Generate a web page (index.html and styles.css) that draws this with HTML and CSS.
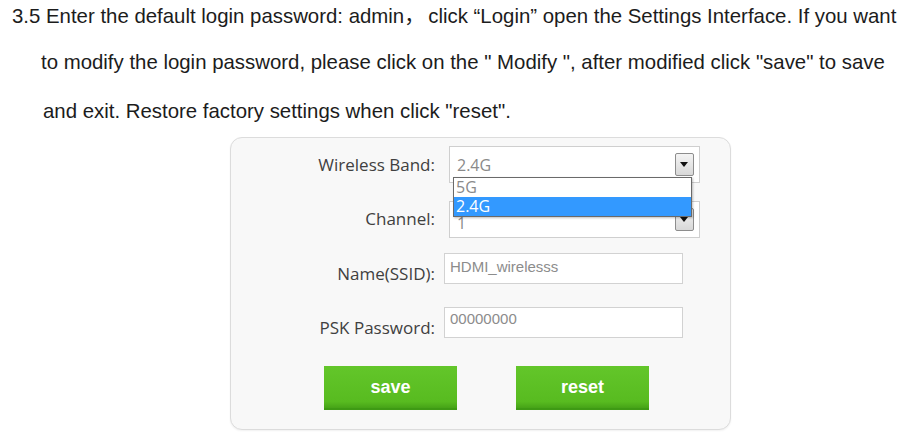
FILE: index.html
```html
<!DOCTYPE html>
<html lang="en">
<head>
<meta charset="utf-8">
<title>Settings</title>
<link rel="stylesheet" href="styles.css">
</head>
<body>
<div class="intro">
  <p class="line first">3.5 Enter the default login password: admin<span class="fw">，</span> click “Login” open the Settings Interface. If you want</p>
  <p class="line second">to modify the login password, please click on the " Modify ", after modified click "save" to save</p>
  <p class="line third">and exit. Restore factory settings when click "reset".</p>
</div>
<div class="panel">
  <div class="row row-band">
    <span class="lbl">Wireless Band:</span>
    <div class="select">
      <span class="val">2.4G</span>
      <span class="arrow"></span>
      <ul class="dropdown">
        <li class="opt">5G</li>
        <li class="opt sel">2.4G</li>
      </ul>
    </div>
  </div>
  <div class="row row-channel">
    <span class="lbl">Channel:</span>
    <div class="select">
      <span class="val val-low">1</span>
      <span class="arrow"></span>
    </div>
  </div>
  <div class="row row-ssid">
    <span class="lbl">Name(SSID):</span>
    <div class="input">HDMI_wirelesss</div>
  </div>
  <div class="row row-psk">
    <span class="lbl">PSK Password:</span>
    <div class="input input-psk">00000000</div>
  </div>
  <div class="buttons">
    <div class="btn">save</div>
    <div class="btn">reset</div>
  </div>
</div>
</body>
</html>
```
FILE: styles.css
```css
html, body {
  margin: 0;
  padding: 0;
  background: #ffffff;
}
body {
  width: 900px;
  height: 439px;
  overflow: hidden;
}
.intro {
  padding-top: 4px;
  font-family: "Liberation Sans", Arial, "Noto Sans CJK SC", sans-serif;
  font-size: 20.4px;
  color: #1c1c1c;
}
.line {
  margin: 0;
  line-height: 24px;
  white-space: nowrap;
}
.first { padding-left: 12px; }
.second { padding-left: 41px; margin-top: 22px; }
.third { padding-left: 43px; margin-top: 25px; }
.fw {
  letter-spacing: -6px;
  margin-right: 4px;
}

.panel {
  box-sizing: border-box;
  margin: 14px 0 0 230px;
  width: 501px;
  height: 293px;
  border: 1px solid #dcdcdc;
  border-radius: 12px;
  background: #f8f8f8;
  box-shadow: 0 1px 2px rgba(0,0,0,0.06);
  padding-top: 8px;
  font-family: "Open Sans", "Noto Sans", sans-serif;
}
.row {
  display: flex;
  align-items: flex-start;
}
.lbl {
  width: 204px;
  text-align: right;
  font-size: 17px;
  line-height: 20px;
  color: #404040;
  flex: none;
}
.row-band .lbl { padding-top: 9px; }
.row-channel { margin-top: 18px; }
.row-channel .lbl { padding-top: 8px; }
.row-ssid { margin-top: 15px; }
.row-ssid .lbl, .row-psk .lbl { padding-top: 11px; }
.row-psk { margin-top: 23px; }

.select {
  position: relative;
  box-sizing: border-box;
  margin-left: 14px;
  width: 251px;
  height: 37px;
  border: 1px solid #cfcfcf;
  background: #ffffff;
}
.val {
  display: block;
  padding: 8px 0 0 7px;
  font-size: 16px;
  line-height: 20px;
  color: #8a8a8a;
}
.val-low { padding-top: 11px; }
.arrow {
  position: absolute;
  right: 5px;
  top: 6px;
  box-sizing: border-box;
  width: 19px;
  height: 23px;
  border: 1px solid #8d8d8d;
  border-radius: 2px;
  background: linear-gradient(#f4f4f4, #d8d8d8);
}
.arrow::after {
  content: "";
  position: absolute;
  left: 4px;
  top: 8px;
  border-left: 4px solid transparent;
  border-right: 4px solid transparent;
  border-top: 5px solid #111;
}
.dropdown {
  position: absolute;
  left: 3px;
  top: 30px;
  z-index: 2;
  box-sizing: border-box;
  width: 239px;
  margin: 0;
  padding: 0;
  list-style: none;
  border: 1px solid #6a6a6a;
  background: #ffffff;
  box-shadow: 1px 1px 2px rgba(0,0,0,0.25);
}
.opt {
  height: 19px;
  line-height: 19px;
  padding-left: 2px;
  font-size: 16px;
  color: #8a8a8a;
}
.opt.sel {
  background: #3399ff;
  color: #ffffff;
}

.input {
  box-sizing: border-box;
  margin-left: 9px;
  width: 239px;
  height: 31px;
  border: 1px solid #d2d2d2;
  background: #ffffff;
  padding: 4px 0 0 5px;
  font-family: "Liberation Sans", Arial, sans-serif;
  font-size: 15px;
  line-height: 18px;
  color: #8c8c8c;
}
.input-psk { padding-top: 2px; }

.buttons {
  display: flex;
  gap: 59px;
  margin: 28px 0 0 93px;
}
.btn {
  box-sizing: border-box;
  width: 133px;
  height: 44px;
  background: linear-gradient(#63c62a, #58bb20 85%, #46a317);
  border-bottom: 2px solid #3e9a14;
  color: #ffffff;
  font-family: "Liberation Sans", Arial, sans-serif;
  font-weight: bold;
  font-size: 18px;
  line-height: 42px;
  text-align: center;
}
```
